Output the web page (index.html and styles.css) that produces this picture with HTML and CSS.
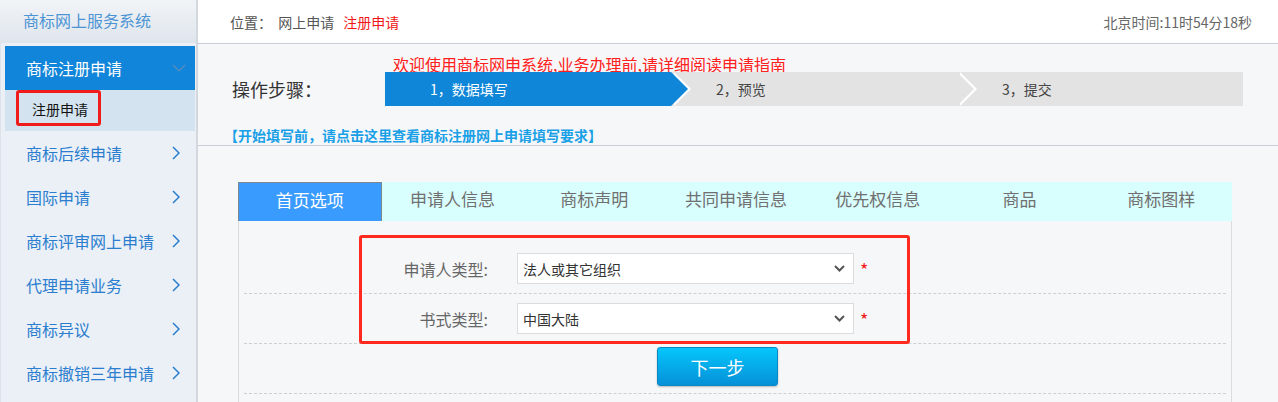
FILE: index.html
```html
<!DOCTYPE html>
<html lang="zh-CN">
<head>
  <meta charset="UTF-8" />
  <meta name="viewport" content="width=device-width, initial-scale=1.0" />
  <title>商标网上服务系统</title>
  <link rel="stylesheet" href="styles.css">
</head>
<body>
  <div class="page">
    <aside class="sidebar">
      <div class="brand">商标网上服务系统</div>
      <ul class="menu">
        <li class="menu-item active">
          <span>商标注册申请</span>
          <svg class="caret-down" width="14" height="8" viewBox="0 0 14 8"><path d="M1 1 L7 7 L13 1" fill="none" stroke="#5d8cbc" stroke-width="1.2"/></svg>
        </li>
        <li class="submenu"><a class="sub-link">注册申请</a></li>
        <li class="menu-item">
          <span>商标后续申请</span>
          <svg class="caret" width="8" height="14" viewBox="0 0 8 14"><path d="M1 1 L7 7 L1 13" fill="none" stroke="#2a7dcf" stroke-width="1.5"/></svg>
        </li>
        <li class="menu-item">
          <span>国际申请</span>
          <svg class="caret" width="8" height="14" viewBox="0 0 8 14"><path d="M1 1 L7 7 L1 13" fill="none" stroke="#2a7dcf" stroke-width="1.5"/></svg>
        </li>
        <li class="menu-item">
          <span>商标评审网上申请</span>
          <svg class="caret" width="8" height="14" viewBox="0 0 8 14"><path d="M1 1 L7 7 L1 13" fill="none" stroke="#2a7dcf" stroke-width="1.5"/></svg>
        </li>
        <li class="menu-item">
          <span>代理申请业务</span>
          <svg class="caret" width="8" height="14" viewBox="0 0 8 14"><path d="M1 1 L7 7 L1 13" fill="none" stroke="#2a7dcf" stroke-width="1.5"/></svg>
        </li>
        <li class="menu-item">
          <span>商标异议</span>
          <svg class="caret" width="8" height="14" viewBox="0 0 8 14"><path d="M1 1 L7 7 L1 13" fill="none" stroke="#2a7dcf" stroke-width="1.5"/></svg>
        </li>
        <li class="menu-item">
          <span>商标撤销三年申请</span>
          <svg class="caret" width="8" height="14" viewBox="0 0 8 14"><path d="M1 1 L7 7 L1 13" fill="none" stroke="#2a7dcf" stroke-width="1.5"/></svg>
        </li>
      </ul>
    </aside>

    <main class="main">
      <header class="topbar">
        <div class="crumb">
          <span class="crumb-label">位置：</span>
          <span class="crumb-item">网上申请</span>
          <span class="crumb-cur">注册申请</span>
        </div>
        <div class="clock">北京时间:11时54分18秒</div>
      </header>

      <section class="steps-head">
        <p class="notice">欢迎使用商标网申系统,业务办理前,请详细阅读申请指南</p>
        <div class="steps-row">
          <span class="steps-label">操作步骤：</span>
          <ol class="steps">
            <li class="step current">1，数据填写</li>
            <li class="step">2，预览</li>
            <li class="step last">3，提交</li>
          </ol>
        </div>
        <a class="guide">【开始填写前，请点击这里查看商标注册网上申请填写要求】</a>
      </section>

      <section class="form-area">
        <ul class="tabs">
          <li class="tab active">首页选项</li>
          <li class="tab">申请人信息</li>
          <li class="tab">商标声明</li>
          <li class="tab">共同申请信息</li>
          <li class="tab">优先权信息</li>
          <li class="tab">商品</li>
          <li class="tab">商标图样</li>
        </ul>
        <div class="panel">
          <div class="form-row">
            <label class="field-label">申请人类型:</label>
            <div class="select">
              <span>法人或其它组织</span>
              <svg width="11" height="7" viewBox="0 0 11 7"><path d="M1 1 L5.5 5.5 L10 1" fill="none" stroke="#555" stroke-width="2"/></svg>
            </div>
            <span class="required">*</span>
          </div>
          <div class="form-row">
            <label class="field-label">书式类型:</label>
            <div class="select">
              <span>中国大陆</span>
              <svg width="11" height="7" viewBox="0 0 11 7"><path d="M1 1 L5.5 5.5 L10 1" fill="none" stroke="#555" stroke-width="2"/></svg>
            </div>
            <span class="required">*</span>
          </div>
          <div class="form-row actions">
            <button class="btn-next">下一步</button>
          </div>
          <div class="mark"></div>
        </div>
      </section>
    </main>
  </div>
</body>
</html>
```

FILE: styles.css
```css
* { box-sizing: border-box; }

body {
  margin: 0;
  font-family: "Noto Sans CJK SC", "Noto Sans", sans-serif;
  background: #f6f7f9;
  color: #333;
}

ul, ol { list-style: none; margin: 0; padding: 0; }
p { margin: 0; }

.page {
  display: flex;
  height: 402px;
  overflow: hidden;
}

/* sidebar */
.sidebar {
  width: 198px;
  flex-shrink: 0;
  background: #eaf0f5;
  border-left: 1px solid #dde3ea;
  border-right: 2px solid #d3d8df;
}

.brand {
  height: 43px;
  margin-left: -1px;
  padding-left: 23px;
  line-height: 41px;
  font-size: 16px;
  color: #4d94d4;
  background: linear-gradient(#f1f4f7, #dfe5ec);
}

.menu { margin: 3px 1px 0 4px; }

.menu-item {
  height: 44px;
  display: flex;
  align-items: center;
  justify-content: space-between;
  padding: 0 15px 0 21px;
  font-size: 16px;
  color: #2a7dcf;
}

.menu-item.active {
  background: #1185d9;
  color: #fff;
  padding-right: 9px;
}

.submenu {
  height: 41px;
  background: #d3e3f0;
  padding-left: 11px;
}

.sub-link {
  display: inline-block;
  height: 36px;
  width: 85px;
  padding-left: 13px;
  line-height: 32px;
  font-size: 14px;
  color: #111;
  border: 3px solid #f01c1c;
  border-radius: 3px;
}

/* main */
.main {
  flex: 1;
  min-width: 0;
}

.topbar {
  height: 44px;
  display: flex;
  align-items: center;
  justify-content: space-between;
  padding: 0 26px 0 32px;
  background: #fff;
  border-bottom: 1px solid #c8cdd9;
  font-size: 14px;
}

.crumb-label { color: #555; margin-right: 3px; }
.crumb-item { color: #555; margin-right: 6px; }
.crumb-cur { color: #f21616; }
.clock { color: #666; }

.steps-head {
  padding: 12px 35px 0 34px;
  border-bottom: 1px solid #c8cdd9;
}

.notice {
  margin-left: 161px;
  height: 16px;
  line-height: 16px;
  font-size: 16px;
  color: #ff2020;
  white-space: nowrap;
}

.steps-row {
  display: flex;
  align-items: center;
}

.steps-label {
  width: 153px;
  font-size: 18px;
  color: #333;
}

.steps {
  flex: 1;
  display: flex;
  height: 34px;
  background: #e3e3e3;
}

.step {
  position: relative;
  flex: 1;
  padding-left: 45px;
  line-height: 34px;
  font-size: 14px;
  color: #444;
}

.step.current {
  background: #1086d8;
  color: #fff;
}

.step::before,
.step::after {
  content: "";
  position: absolute;
  top: 0;
  border-top: 17px solid transparent;
  border-bottom: 17px solid transparent;
  border-left: 17px solid #e3e3e3;
}

.step::before {
  right: -20px;
  border-left-color: #fff;
  z-index: 1;
}

.step::after {
  right: -17px;
  z-index: 2;
}

.step.current::after { border-left-color: #1086d8; }
.step.last::before,
.step.last::after { display: none; }

.guide {
  display: block;
  margin: 19px 0 0 -8px;
  height: 20px;
  line-height: 20px;
  font-size: 14px;
  font-weight: bold;
  color: #1aa0e6;
}

/* form */
.form-area {
  padding: 36px 46px 0 40px;
}

.tabs {
  display: flex;
  height: 39px;
  background: #d9fefe;
}

.tab {
  flex: 1;
  text-align: center;
  line-height: 33px;
  font-size: 17px;
  color: #707070;
}

.tab.active {
  background: #3a9bff;
  color: #fff;
  border: 1px solid #7f8891;
  border-bottom: none;
}

.panel {
  position: relative;
  height: 200px;
  padding: 23px 5px 0;
  border-left: 1px solid #dcdcdc;
  border-right: 1px solid #dcdcdc;
}

.form-row {
  height: 50px;
  display: flex;
  align-items: center;
  border-bottom: 1px dashed #cfcfcf;
}

.field-label {
  width: 244px;
  margin-right: 29px;
  text-align: right;
  font-size: 16px;
  color: #666;
}

.select {
  width: 337px;
  height: 31px;
  display: flex;
  align-items: center;
  justify-content: space-between;
  padding: 0 8px 0 5px;
  background: #fff;
  border: 1px solid #dcdcdc;
  font-size: 14px;
  color: #333;
}

.required {
  margin: 0 0 0 6px;
  font-size: 18px;
  line-height: 18px;
  color: #f02020;
}

.actions {
  align-items: flex-start;
}

.btn-next {
  margin: 3px 0 0 413px;
  width: 121px;
  height: 39px;
  font-family: inherit;
  font-size: 18px;
  color: #fff;
  background: linear-gradient(#05c6fc, #0690d8);
  border: 1px solid #0b88c4;
  border-radius: 3px;
  box-shadow: 0 1px 2px rgba(0, 0, 0, 0.25);
}

.mark {
  position: absolute;
  left: 120px;
  top: 14px;
  width: 551px;
  height: 109px;
  border: 3px solid #ff2a1f;
  border-radius: 3px;
}
```
